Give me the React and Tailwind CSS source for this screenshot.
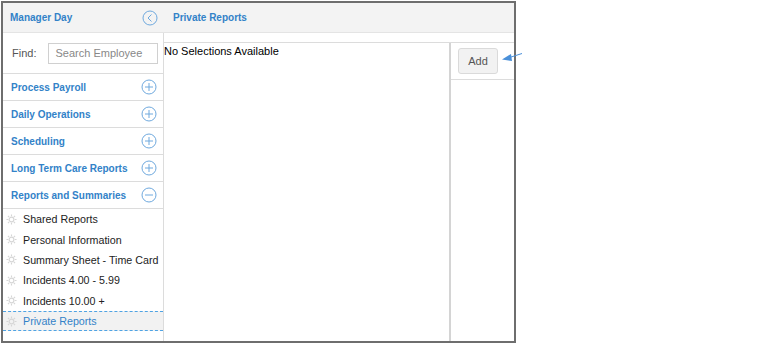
const sections = [
  { label: 'Process Payroll', open: false },
  { label: 'Daily Operations', open: false },
  { label: 'Scheduling', open: false },
  { label: 'Long Term Care Reports', open: false },
  { label: 'Reports and Summaries', open: true },
];

const items = [
  'Shared Reports',
  'Personal Information',
  'Summary Sheet - Time Card',
  'Incidents 4.00 - 5.99',
  'Incidents 10.00 +',
  'Private Reports',
];

const CircleIcon = ({ kind }) => (
  <svg width="16" height="16" viewBox="0 0 16 16" fill="none" stroke="#6fa9de" strokeWidth="1">
    <circle cx="8" cy="8" r="7" />
    {kind === 'back' && <path d="M9.5 4.5 L6 8 L9.5 11.5" />}
    {kind !== 'back' && <path d="M4 8 H12" />}
    {kind === 'plus' && <path d="M8 4 V12" />}
  </svg>
);

const Gear = () => (
  <svg width="11" height="11" viewBox="0 0 12 12" fill="none" stroke="#d6d6d6" strokeWidth="1.2">
    <circle cx="6" cy="6" r="2.6" />
    <path d="M6 0.5V2.5M6 9.5V11.5M0.5 6H2.5M9.5 6H11.5M2.1 2.1L3.5 3.5M8.5 8.5L9.9 9.9M2.1 9.9L3.5 8.5M8.5 3.5L9.9 2.1" />
  </svg>
);

export default function App() {
  return (
    <div className="relative w-[760px] h-[347px] bg-white font-['Liberation_Sans',Arial,sans-serif]">
      <div className="ml-px mt-px w-[515px] h-[342px] border-2 border-[#6e6e6e] flex flex-col overflow-hidden">
        <div className="flex h-[30px] shrink-0 bg-[#f3f3f3] border-b border-[#e4e4e4]">
          <div className="w-[161px] flex items-center justify-between pl-[7px] pr-[6px]">
            <span className="text-[10px] font-bold text-[#3282c8]">Manager Day</span>
            <CircleIcon kind="back" />
          </div>
          <div className="pl-[9px] flex items-center text-[10px] font-bold text-[#3282c8]">Private Reports</div>
        </div>
        <div className="flex flex-1 min-h-0">
          <div className="w-[161px] shrink-0 border-r border-[#dcdcdc] flex flex-col">
            <div className="h-[41px] flex items-center border-b border-[#dcdcdc] pl-[9px] gap-[12px]">
              <span className="text-[11px] text-[#555]">Find:</span>
              <div className="w-[110px] h-[21px] border border-[#d0d0d0] flex items-center pl-[6px] text-[11px] text-[#888] whitespace-nowrap">
                Search Employee
              </div>
            </div>
            {sections.map((s) => (
              <div key={s.label} className="h-[27px] flex items-center justify-between border-b border-[#dcdcdc] pl-[8px] pr-[6px]">
                <span className="text-[10px] font-bold text-[#3282c8] whitespace-nowrap">{s.label}</span>
                <CircleIcon kind={s.open ? 'minus' : 'plus'} />
              </div>
            ))}
            <div className="flex flex-col">
              {items.map((it, i) => {
                const sel = i === items.length - 1;
                return (
                  <div
                    key={it}
                    className={`h-[20.4px] flex items-center gap-[6px] pl-[3px] text-[10.7px] whitespace-nowrap ${
                      sel
                        ? 'bg-[#f2f2f2] border-y border-dashed border-[#4fa3e3] text-[#3282c8]'
                        : 'text-[#222]'
                    }`}
                  >
                    <Gear />
                    <span>{it}</span>
                  </div>
                );
              })}
            </div>
          </div>
          <div className="flex-1 flex flex-col">
            <div className="h-[10px] shrink-0 border-b border-[#dcdcdc]" />
            <div className="flex flex-1">
              <div className="w-[287px] border-r-2 border-[#d4d4d4] text-[11px] text-black leading-[14px] pt-px">
                No Selections Available
              </div>
              <div className="flex-1 flex flex-col">
                <div className="h-[37px] border-b border-[#dcdcdc] pl-[7px] pt-[5px]">
                  <div className="w-[40px] h-[26px] bg-[#f2f2f2] border border-[#dadada] rounded-[3px] flex items-center justify-center text-[11px] text-[#555]">
                    Add
                  </div>
                </div>
              </div>
            </div>
          </div>
        </div>
      </div>
      <svg className="absolute left-[500px] top-[48px]" width="26" height="16" viewBox="0 0 26 16">
        <path d="M22 4.5 L8 9" stroke="#4a90d9" strokeWidth="1" fill="none" />
        <path d="M2 10.5 L11 5 L12 12 Z" fill="#4a90d9" />
      </svg>
    </div>
  );
}
